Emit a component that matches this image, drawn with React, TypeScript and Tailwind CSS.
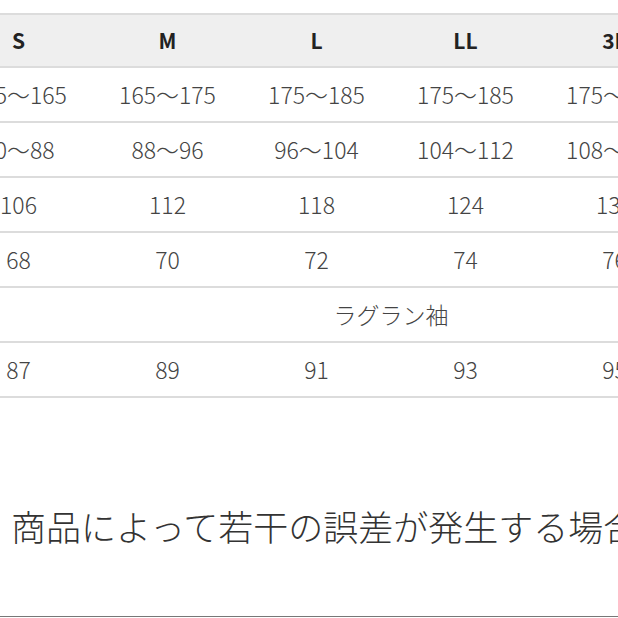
import React from "react";

const sizes = ["S", "M", "L", "LL", "3L", "4L"];

const rows: string[][] = [
  ["155〜165", "165〜175", "175〜185", "175〜185", "175〜185", "175〜185"],
  ["80〜88", "88〜96", "96〜104", "104〜112", "108〜116", "112〜120"],
  ["106", "112", "118", "124", "130", "136"],
  ["68", "70", "72", "74", "76", "78"],
];

const sleeve = ["87", "89", "91", "93", "95", "97"];

function Row({ cells }: { cells: string[] }) {
  return (
    <div className="flex h-[55px] border-b-2 border-[#dcdcdc]">
      {cells.map((c, i) => (
        <div key={i} className="w-[149px] shrink-0 flex items-center justify-center text-[23px] text-[#444] font-light">
          {c}
        </div>
      ))}
    </div>
  );
}

export default function App() {
  return (
    <div
      className="w-[618px] h-[618px] overflow-hidden bg-white flex flex-col"
      style={{ fontFamily: '"Noto Sans CJK JP", "Noto Sans", sans-serif' }}
    >
      <div className="mt-[13px] ml-[-56px] w-[894px] border-t-2 border-[#dcdcdc]">
        {/* header */}
        <div className="flex h-[53px] bg-[#efefef] border-b-2 border-[#dcdcdc]">
          {sizes.map((s) => (
            <div key={s} className="w-[149px] shrink-0 flex items-center justify-center text-[21px] font-bold text-[#222]">
              {s}
            </div>
          ))}
        </div>
        {rows.map((r, i) => (
          <Row key={i} cells={r} />
        ))}
        <div className="flex h-[55px] items-center justify-center border-b-2 border-[#dcdcdc] text-[23px] text-[#444] font-light">
          ラグラン袖
        </div>
        <Row cells={sleeve} />
      </div>

      <p className="mt-[110px] pl-[11px] whitespace-nowrap text-[35px] leading-none font-light text-[#333]">
        商品によって若干の誤差が発生する場合があります。
      </p>

      <div className="mt-auto mb-[1px] h-px bg-[#777]" />
    </div>
  );
}
